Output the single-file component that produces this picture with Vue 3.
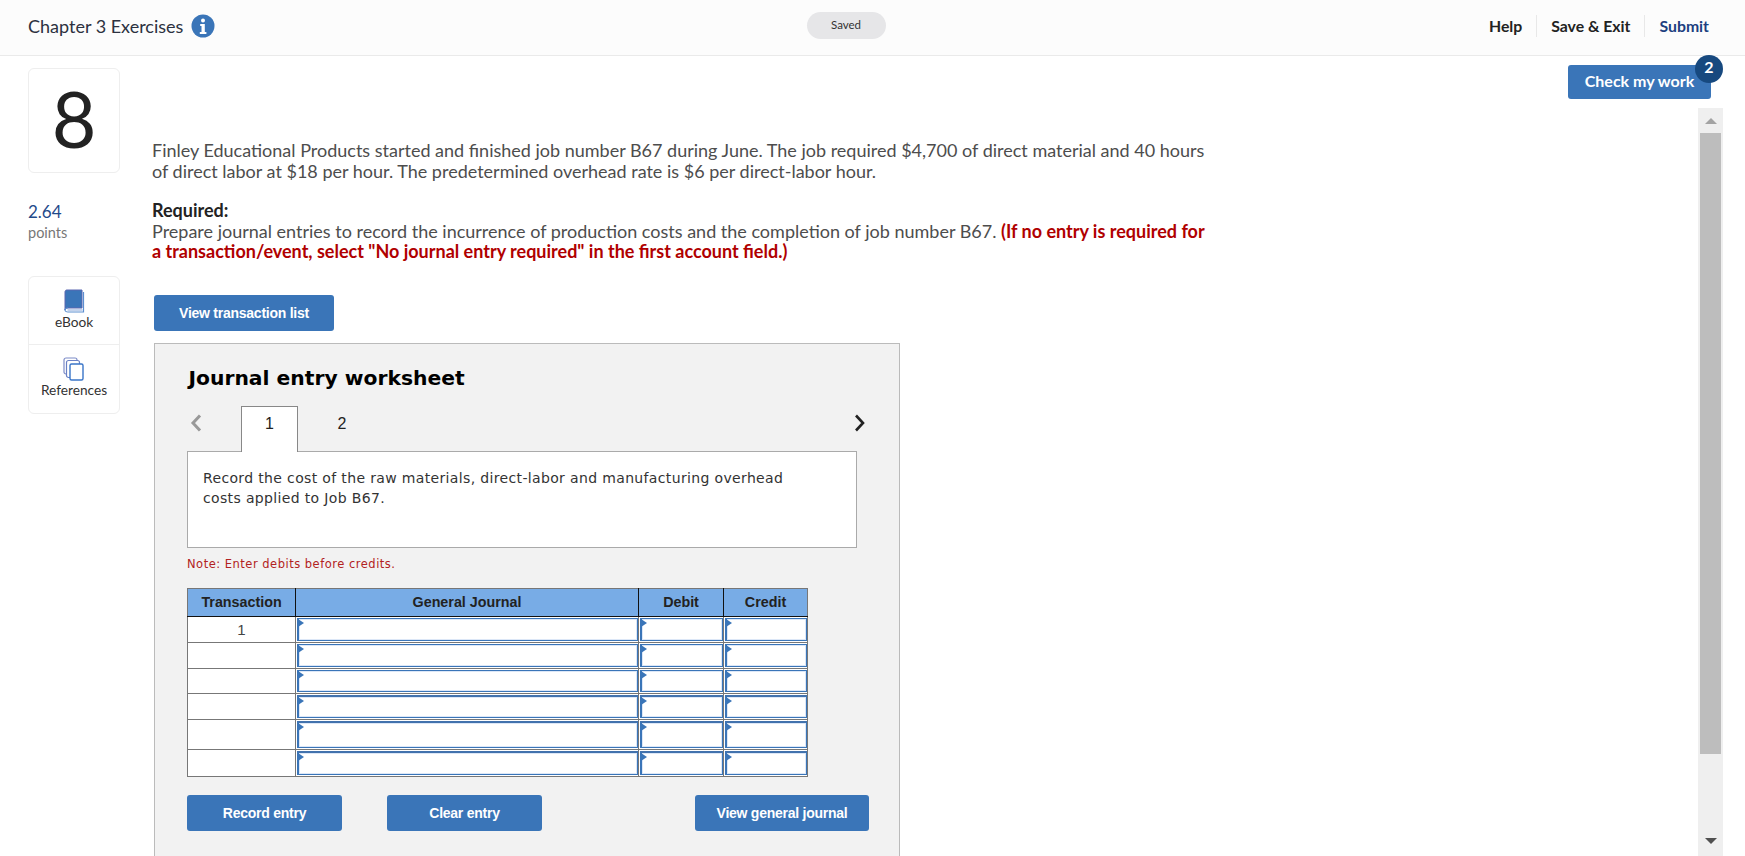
<script setup>
const rows = [
  { id: 1, label: '1', h: 26, edge: 'edge-thin' },
  { id: 2, label: '', h: 26, edge: 'edge-thin' },
  { id: 3, label: '', h: 25, edge: 'edge-thin' },
  { id: 4, label: '', h: 26, edge: 'edge-thick' },
  { id: 5, label: '', h: 30, edge: 'edge-thick' },
  { id: 6, label: '', h: 27, edge: 'edge-thick' }
]
</script>

<template>
  <div class="page">
    <header class="topbar">
      <div class="top-left">
        <span class="chapter">Chapter 3 Exercises</span>
        <svg class="info" viewBox="0 0 24 24" width="24" height="24">
          <circle cx="12" cy="12" r="11.5" fill="#3a75b8" />
          <circle cx="12" cy="6.600" r="2" fill="#fff" />
          <path d="M9.200 10h4.600v8h1.600v1.900H8.800V18h1.700v-6.100H9.200z" fill="#fff" />
        </svg>
      </div>
      <div class="saved">Saved</div>
      <nav class="top-right">
        <a class="nav dark">Help</a>
        <a class="nav dark">Save &amp; Exit</a>
        <a class="nav navy">Submit</a>
      </nav>
    </header>

    <div class="body">
      <aside class="side">
        <div class="qnum">8</div>
        <div class="score">2.64</div>
        <div class="points">points</div>
        <div class="tools">
          <div class="tool">
            <svg viewBox="0 0 22 24" width="22" height="24">
              <path d="M3.500 1H19v18H4.500C3 19 2 20 2 21V3c0-1 .6-2 1.500-2z" fill="#3a75b8" stroke="#5a66b0" stroke-width="1" />
              <path d="M20.500 3v20H5c-1.800 0-3-1-3-2s1-2 3-2" fill="none" stroke="#5d8fd0" stroke-width="1.200" />
              <path d="M4.500 21h15" stroke="#9db6e0" stroke-width="1.200" />
            </svg>
            <span>eBook</span>
          </div>
          <div class="tool tool-second">
            <svg viewBox="0 0 22 24" width="22" height="24" fill="#fff">
              <rect x="1" y="1" width="13" height="16" rx="2" stroke="#7d8cc8" stroke-width="1.200" />
              <rect x="3.500" y="3.500" width="13" height="17" rx="2" stroke="#6a80c4" stroke-width="1.200" />
              <rect x="7" y="7" width="13" height="16" rx="1.500" stroke="#3a75c8" stroke-width="1.400" />
            </svg>
            <span>References</span>
          </div>
        </div>
      </aside>

      <main class="content">
        <p class="para">Finley Educational Products started and finished job number B67 during June. The job required $4,700 of direct material and 40 hours of direct labor at $18 per hour. The predetermined overhead rate is $6 per direct-labor hour.</p>
        <p class="para req"><strong class="req-title">Required:</strong><br />Prepare journal entries to record the incurrence of production costs and the completion of job number B67. <strong class="red">(If no entry is required for a transaction/event, select "No journal entry required" in the first account field.)</strong></p>
        <button class="btn list-btn">View transaction list</button>

        <section class="sheet">
          <h2 class="sheet-title">Journal entry worksheet</h2>
          <div class="tabs">
            <svg class="arrow" viewBox="0 0 12 18" width="12" height="18"><path d="M10 1.500 3 9l7 7.500" fill="none" stroke="#999" stroke-width="3" /></svg>
            <div class="tab active">1</div>
            <div class="tab">2</div>
            <svg class="arrow next" viewBox="0 0 12 18" width="12" height="18"><path d="m2 1.500 7 7.500-7 7.500" fill="none" stroke="#222" stroke-width="2.600" /></svg>
          </div>
          <div class="desc">Record the cost of the raw materials, direct-labor and manufacturing overhead costs applied to Job B67.</div>
          <div class="note">Note: Enter debits before credits.</div>

          <table class="journal">
            <thead>
              <tr>
                <th class="c-t">Transaction</th>
                <th class="c-g">General Journal</th>
                <th class="c-d">Debit</th>
                <th class="c-c">Credit</th>
              </tr>
            </thead>
            <tbody>
              <tr v-for="r in rows" :key="r.id" :style="{ height: r.h + 'px' }">
                <td class="tx">{{ r.label }}</td>
                <td class="entry" v-for="c in 3" :key="c"><div class="field" :class="r.edge"></div></td>
              </tr>
            </tbody>
          </table>

          <div class="actions">
            <button class="btn act1">Record entry</button>
            <button class="btn act2">Clear entry</button>
            <button class="btn act3">View general journal</button>
          </div>
        </section>
      </main>

      <div class="rail">
        <button class="check">Check my work<span class="badge">2</span></button>
        <div class="scrollbar">
          <span class="tri up"></span>
          <div class="thumb"></div>
          <span class="tri down"></span>
        </div>
      </div>
    </div>
  </div>
</template>

<style>
html, body { margin: 0; background: #fff; overflow: hidden; }
</style>

<style scoped>
.page { width: 1745px; height: 856px; display: flex; flex-direction: column; overflow: hidden; font-family: Lato, "Liberation Sans", sans-serif; color: #333; }
.topbar { height: 51px; flex: none; background: #fcfcfc; border-bottom: 1px solid #eaeaea; display: grid; grid-template-columns: 1fr auto 1fr; align-items: center; padding: 0 22px 4px 28px; }
.top-left { display: flex; align-items: center; gap: 8px; }
.chapter { font-size: 18px; color: #2c3140; }
.info { display: block; }
.saved { width: 79px; height: 27px; margin-right: 59px; border-radius: 14px; background: #e6e6e8; font-size: 11.500px; line-height: 25px; text-align: center; color: #333; }
.top-right { display: flex; justify-content: flex-end; }
.nav { font-size: 15.800px; font-weight: 700; padding: 0 14px; line-height: 22px; border-left: 1px solid #e8e8e8; }
.nav:first-child { border-left: 0; }
.dark { color: #222; }
.navy { color: #1d3f80; }

.body { flex: 1; display: flex; min-height: 0; }
.side { width: 92px; margin-left: 28px; flex: none; padding-top: 12px; }
.qnum { height: 103px; border: 1px solid #eee; border-radius: 6px; text-align: center; font-size: 77px; line-height: 98px; color: #222; font-weight: 400; }
.score { margin-top: 29px; font-size: 17px; line-height: 20px; color: #1f4a8a; }
.points { margin-top: 1px; font-size: 14.500px; line-height: 20px; color: #777; }
.tools { margin-top: 33px; border: 1px solid #eee; border-radius: 6px; }
.tool { height: 67px; display: flex; flex-direction: column; align-items: center; padding-top: 12px; box-sizing: border-box; font-size: 13.700px; line-height: 17px; color: #333; }
.tool-second { border-top: 1px solid #eee; height: 69px; }

.content { width: 1060px; margin-left: 32px; flex: none; padding-top: 84px; min-height: 0; }
.para { margin: 0; font-size: 18px; line-height: 20.500px; color: #4d4d4d; }
.req { margin-top: 19px; }
.req-title { color: #222; }
.red { color: #b00000; }
.btn { border: 0; border-radius: 3px; background: #3a75b8; color: #fff; font-family: "Liberation Sans", sans-serif; font-weight: 700; font-size: 14px; letter-spacing: -0.250px; padding: 0; height: 36px; display: block; flex: none; }
.list-btn { width: 180px; margin: 33px 0 0 2px; }
.sheet { width: 746px; margin: 12px 0 0 2px; height: 520px; box-sizing: border-box; border: 1px solid #bbb; border-bottom: 0; background: #f2f2f2; padding: 0 32px; }
.sheet-title { margin: 21px 0 0 1.500px; font: 700 20.300px/26px "DejaVu Sans", sans-serif; color: #000; }
.tabs { display: flex; align-items: center; height: 46px; margin-top: 15px; position: relative; z-index: 1; margin-bottom: -1px; }
.arrow { margin-left: 3px; margin-bottom: 12px; }
.next { margin-left: auto; margin-right: 1px; }
.tab { height: 46px; text-align: center; font: 16px/35px "Liberation Sans", sans-serif; color: #222; box-sizing: border-box; }
.tab.active { width: 57px; margin-left: 39px; background: #fff; border: 1px solid #888; border-bottom: 0; line-height: 33px; }
.tabs .tab:nth-child(3) { margin-left: 32px; width: 24px; }
.desc { width: 670px; height: 97px; box-sizing: border-box; background: #fff; border: 1px solid #aaa; padding: 16px 60px 0 15px; font: 14px/20px "DejaVu Sans", sans-serif; letter-spacing: 0.350px; color: #333; }
.note { margin-top: 9px; font: 11.500px/14px "DejaVu Sans", sans-serif; letter-spacing: 0.500px; color: #b22222; }
.journal { margin-top: 17px; width: 621px; table-layout: fixed; border-collapse: collapse; font-family: "Liberation Sans", sans-serif; background: #fff; border: 1.500px solid #777; }
.journal th { box-sizing: border-box; height: 28px; padding: 0; background: #78ace6; font-size: 14.300px; font-weight: 700; color: #222; border-left: 1px solid #111; border-bottom: 1px solid #111; }
.journal th:first-child { border-left: 0; }
.c-t { width: 108px; }
.c-g { width: 343px; }
.c-d { width: 85px; }
.c-c { width: 84px; }
.journal td { padding: 0; border: 1px solid #777; position: relative; }
.tx { text-align: center; font-size: 15px; color: #444; vertical-align: middle; }
.journal td.entry { padding: 0; }
.field { position: absolute; inset: 1px 0 1px 1px; box-sizing: border-box; background: #fff; border: 1px solid #3a75b8; border-left-width: 2px; box-shadow: inset 0 0 0 1px #dce7f7; }
.field::before { content: ""; position: absolute; left: -1px; top: 0; border-left: 6px solid #3a75b8; border-top: 4px solid transparent; border-bottom: 4px solid transparent; }
.edge-thick { border-top-width: 2px; border-top-color: #4272ad; }
.actions { display: flex; margin-top: 18px; }
.act1 { width: 155px; }
.act2 { width: 155px; margin-left: 45px; }
.act3 { width: 174px; margin-left: 153px; }

.rail { margin-left: auto; width: 157px; margin-right: 22px; flex: none; display: flex; flex-direction: column; align-items: flex-end; position: relative; }
.check { position: relative; width: 143px; height: 34px; margin: 9px 12px 0 0; border: 0; border-radius: 3px; background: #3a75b8; color: #fff; font: 700 16px Lato, sans-serif; padding: 0 0 3px; }
.badge { position: absolute; right: -12px; top: -10px; width: 28px; height: 28px; border-radius: 50%; background: #17497f; color: #fff; font-size: 16px; line-height: 24px; text-align: center; }
.scrollbar { width: 25px; margin-top: 9px; flex: 1; background: #efefef; display: flex; flex-direction: column; align-items: center; }
.thumb { width: 21px; height: 621px; background: #bdbdbd; margin-top: 9px; }
.tri { width: 0; height: 0; border-left: 6px solid transparent; border-right: 6px solid transparent; }
.up { border-bottom: 6px solid #a3a3a3; margin-top: 10px; }
.down { border-top: 6px solid #505050; margin-top: 84px; }
</style>
